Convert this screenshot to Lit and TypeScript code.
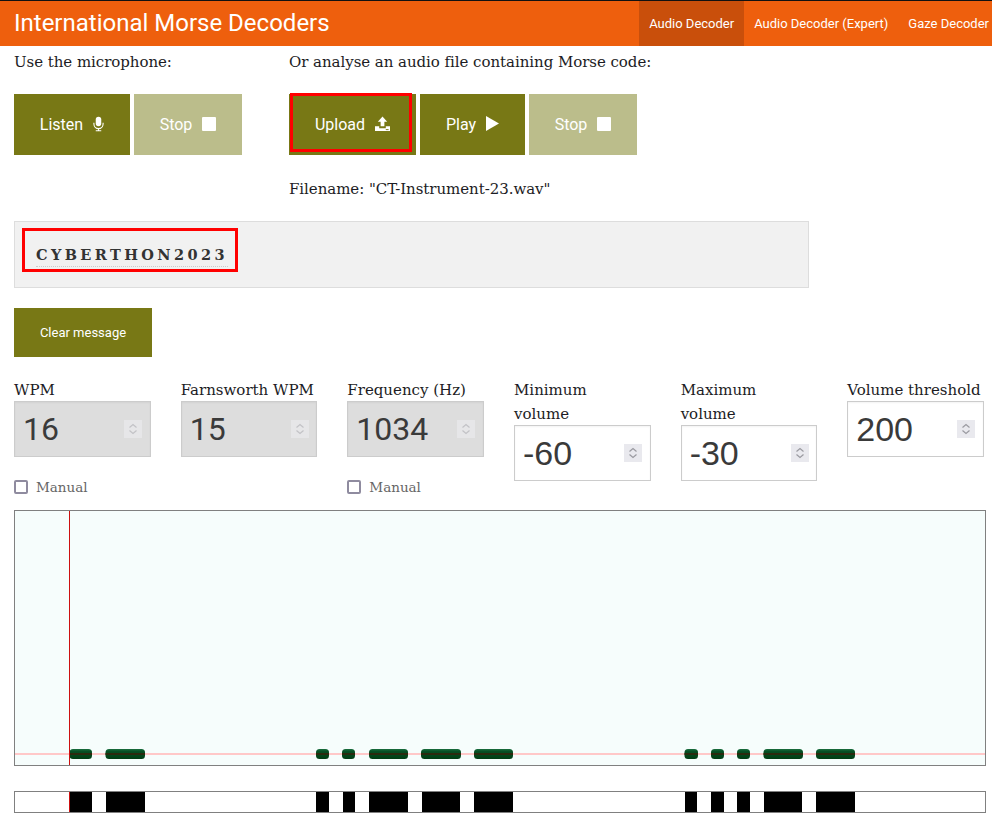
import { LitElement, html, css, svg } from "lit";
import { customElement } from "lit/decorators.js";

const CHART: [number, number][] = [[69.5,92],[105.5,145],[316,329],[342,355],[369,408],[421,461],[474,513],[684.5,698],[711,724],[737,750],[763.5,803],[816,855]];
const BARS: [number, number][] = [[69,92],[106,145],[316,329],[343,355],[369,408],[422,460],[474,513],[685,697],[711,724],[737,750],[764,802],[816,855]];

interface Field { label: string; value: string; disabled: boolean; manual: boolean; wrap: boolean; }
const FIELDS: Field[] = [
  { label: "WPM", value: "16", disabled: true, manual: true, wrap: false },
  { label: "Farnsworth WPM", value: "15", disabled: true, manual: false, wrap: false },
  { label: "Frequency (Hz)", value: "1034", disabled: true, manual: true, wrap: false },
  { label: "Minimum volume", value: "-60", disabled: false, manual: false, wrap: true },
  { label: "Maximum volume", value: "-30", disabled: false, manual: false, wrap: true },
  { label: "Volume threshold", value: "200", disabled: false, manual: false, wrap: false },
];

const mic = html`<svg class="ico" width="11" height="16" viewBox="0 0 12 16"><rect x="3" y="0" width="6" height="10.5" rx="3" fill="#fff"/><path d="M1 6.500v1.500a5 5 0 0 0 10 0v-1.500M6 13v2M3 15.400h6" fill="none" stroke="#fff" stroke-width="1.200"/></svg>`;
const stop = html`<svg class="ico" width="14" height="14" viewBox="0 0 14 14"><rect width="14" height="14" rx="1" fill="#fff"/></svg>`;
const upload = html`<svg class="ico" width="15" height="16" viewBox="0 0 16 16"><path d="M8 0l5 5.500h-3v5h-4v-5h-3zM0 10.500h4.500v2h7v-2h4.500v5h-16z" fill="#fff"/><path d="M11.500 13.500h3v1h-3z" fill="#787815"/></svg>`;
const play = html`<svg class="ico" width="13" height="15" viewBox="0 0 13 15"><path d="M0 0l13 7.500l-13 7.500z" fill="#fff"/></svg>`;

@customElement("app-root")
export class AppRoot extends LitElement {
  static styles = css`
    :host { display: block; width: 992px; height: 822px; overflow: hidden; font-family: "DejaVu Serif", serif; color: #1c1c24; background: #fff; }
    * { box-sizing: border-box; }
    header { display: flex; align-items: stretch; justify-content: space-between; height: 46px; background: #ee5f0d; border-top: 1px solid #111; color: #fff; font-family: Roboto, sans-serif; width: 999px; }
    .title { font-size: 24px; line-height: 46px; padding-left: 14px; margin-top: -1px; }
    nav { display: flex; font-size: 13px; }
    nav a { display: flex; align-items: center; padding: 0 10px; height: 45px; }
    nav a.active { background: #c94f0b; }
    main { padding: 0 14px; }
    .top { display: flex; }
    .col1 { width: 275px; }
    .line { font-size: 15px; line-height: 24px; height: 24px; margin-top: 4px; white-space: nowrap; letter-spacing: -0.050px; }
    .btns { display: flex; gap: 4px; margin-top: 20px; }
    .btn { position: relative; display: flex; align-items: center; justify-content: center; height: 61px; background: #787815; color: #fff; font: 16px Roboto, sans-serif; }
    .btn.off { background: #bbbd8b; }
    .ico { margin: -2px 0 0 10px; display: block; }
    .w116 { width: 116px; } .w108 { width: 108px; } .w127 { width: 127px; } .w105 { width: 105px; }
    .mark { position: absolute; border: 3px solid #f00; pointer-events: none; }
    .mark.up { left: 1px; top: -1px; width: 122px; height: 59px; }
    .mark.msg { left: 7px; top: 6px; width: 216px; height: 44px; }
    .file { font-size: 15px; line-height: 24px; margin-top: 22px; white-space: nowrap; letter-spacing: -0.050px; }
    .msgbox { position: relative; width: 795px; height: 67px; margin-top: 20px; background: #f1f1f1; border: 1px solid #ddd; padding: 21px 0 0 21px; }
    .msgtext { display: inline-block; font-size: 14.500px; font-weight: 700; letter-spacing: 3.400px; color: #333; line-height: 24px; height: 24px; border-bottom: 1px dotted #ccc; }
    .clear { width: 138px; height: 49px; margin-top: 20px; font-size: 13px; }
    .fields { display: grid; grid-template-columns: repeat(6, 166.670px); margin-top: 21px; height: 132px; }
    .field { width: 136.670px; }
    label.cap { display: block; font-size: 15px; line-height: 24px; margin-bottom: -1px; white-space: nowrap; }
    label.cap.wrap { white-space: normal; width: 100px; }
    .numwrap { position: relative; width: 136.670px; height: 56px; }
    .numwrap input { display: block; width: 100%; height: 100%; border: 1px solid #ccc; background: #fff; padding: 0 8px; font: 34px "Liberation Sans", sans-serif; color: #3a3a3a; outline: none; border-radius: 0; box-shadow: inset 0 1px 2px rgba(0,0,0,.05); appearance: textfield; }
    .numwrap input:disabled { background: #ddd; font: 32px Roboto, sans-serif; padding-left: 8px; opacity: 1; -webkit-text-fill-color: #3a3a3a; }
    .numwrap input::-webkit-inner-spin-button { display: none; }
    .spin { position: absolute; left: 110px; top: 19px; width: 18px; height: 18px; background: #e9e9ee; }
    .spin.dis { background: #e6e6e8; }
    .spin svg { display: block; }
    .chev { fill: none; stroke: #9a9aa0; stroke-width: 1.200; }
    .spin.dis .chev { stroke: #c2c2c6; }
    .manual { display: flex; align-items: center; gap: 8px; margin-top: 21px; height: 18px; font-size: 13.500px; color: #666; }
    .manual input { appearance: none; margin: 0; width: 14px; height: 14px; border: 2px solid #8f8b9f; border-radius: 2px; background: #fff; }
    .chart { display: block; width: 972px; height: 256px; border: 1px solid #808080; background: #f6fdfc; }
    .chart svg, .bar svg { display: block; }
    .bar { width: 972px; height: 22px; margin-top: 25px; border: 1px solid #808080; background: #fff; }
    .guide { fill: #ffc8c8; }
    .cursor { fill: #cc1010; }
    .seg { fill: url(#g); }
    .core { fill: #2c2a0e; }
    .blk { fill: #000; }
  `;

  render() {
    return html`
      <header>
        <div class="title">International Morse Decoders</div>
        <nav>
          <a class="active">Audio Decoder</a>
          <a>Audio Decoder (Expert)</a>
          <a>Gaze Decoder</a>
        </nav>
      </header>
      <main>
        <div class="top">
          <div class="col1">
            <div class="line">Use the microphone:</div>
            <div class="btns">
              <div class="btn w116">Listen ${mic}</div>
              <div class="btn off w108">Stop ${stop}</div>
            </div>
          </div>
          <div>
            <div class="line">Or analyse an audio file containing Morse code:</div>
            <div class="btns">
              <div class="btn w127">Upload ${upload}<span class="mark up"></span></div>
              <div class="btn w105">Play ${play}</div>
              <div class="btn off w108">Stop ${stop}</div>
            </div>
            <div class="file">Filename: "CT-Instrument-23.wav"</div>
          </div>
        </div>
        <div class="msgbox"><span class="msgtext">CYBERTHON2023</span><span class="mark msg"></span></div>
        <div class="btn clear">Clear message</div>
        <div class="fields">
          ${FIELDS.map((f) => html`
            <div class="field">
              <label class="cap ${f.wrap ? "wrap" : ""}">${f.label}</label>
              <div class="numwrap">
                <input type="number" .value=${f.value} ?disabled=${f.disabled} />
                <div class="spin ${f.disabled ? "dis" : ""}">
                  <svg width="18" height="18" viewBox="0 0 18 18"><path class="chev" d="M5.500 7.500L9 4.500L12.500 7.500M5.500 10.500L9 13.500L12.500 10.500"/></svg>
                </div>
              </div>
              ${f.manual ? html`<div class="manual"><input type="checkbox" />Manual</div>` : ""}
            </div>`)}
        </div>
        <div class="chart">
          <svg width="970" height="254" viewBox="15 511 970 254">
            <defs><linearGradient id="g" x1="0" y1="0" x2="0" y2="1"><stop offset="0" stop-color="#1a6e3e"/><stop offset=".25" stop-color="#064f24"/><stop offset="1" stop-color="#003c12"/></linearGradient></defs>
            <rect class="guide" x="15" y="753" width="970" height="2"/>
            ${CHART.map(([a, b]) => svg`<rect class="seg" x=${a} y="749" width=${b - a} height="10" rx="3.5"/><rect class="core" x=${a} y="753" width=${b - a} height="2"/>`)}
            <rect class="cursor" x="69" y="511" width="1" height="254"/>
          </svg>
        </div>
        <div class="bar">
          <svg width="970" height="20" viewBox="15 792 970 20">
            ${BARS.map(([a, b]) => svg`<rect class="blk" x=${a} y="792" width=${b - a} height="20"/>`)}
            <rect class="cursor" x="69" y="792" width="1" height="20"/>
          </svg>
        </div>
      </main>
    `;
  }
}
